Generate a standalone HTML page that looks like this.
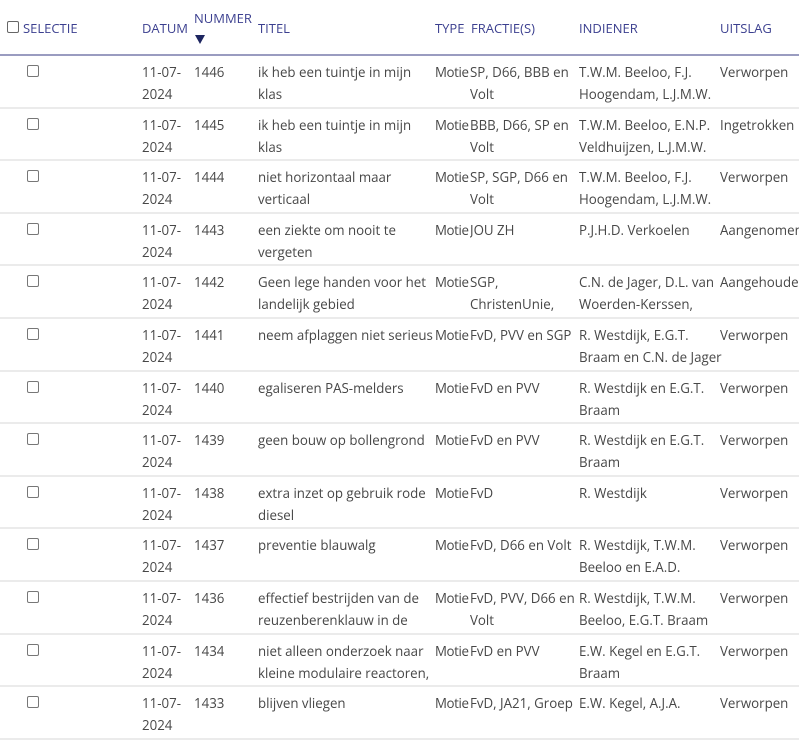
<!DOCTYPE html>
<html><head><meta charset="utf-8">
<style>
*{margin:0;padding:0;box-sizing:border-box}
body{width:799px;height:712px;overflow:hidden;background:#fff;font-family:"Open Sans","Liberation Sans",sans-serif;font-size:13.3px;color:#474747;position:relative}
.h{position:absolute;color:#3b3f8f;font-size:13px;top:20px;line-height:16px}
.hl{position:absolute;left:0;top:54px;width:799px;height:2px;background:#9a9cc0}
.r{position:absolute;left:0;width:799px;height:52.6px;border-bottom:2px solid #ebebeb}
.c{position:absolute;top:5px;line-height:22px;height:44px;overflow:hidden;white-space:normal}
.m{letter-spacing:-0.4px}
.cb{position:absolute;left:27px;top:9px;width:12px;height:12px;border:1px solid #777;border-radius:2px;background:#fff}
</style></head><body>
<div style="position:absolute;left:7px;top:21px;width:12px;height:12px;border:1px solid #666;border-radius:2px"></div>
<div class="h" style="left:23px">SELECTIE</div>
<div class="h" style="left:142px">DATUM</div>
<div class="h" style="left:194px;top:10px">NUMMER</div>
<div style="position:absolute;left:195px;top:35px;width:0;height:0;border-left:5px solid transparent;border-right:5px solid transparent;border-top:9px solid #1d2560"></div>
<div class="h" style="left:258px">TITEL</div>
<div class="h" style="left:435px">TYPE</div>
<div class="h" style="left:471px">FRACTIE(S)</div>
<div class="h" style="left:579px">INDIENER</div>
<div class="h" style="left:720px">UITSLAG</div>
<div class="hl"></div>

<div class="r" style="top:56px"><div class="cb"></div><div class="c" style="left:142px;width:45px">11-07-<br>2024</div><div class="c" style="left:194px">1446</div><div class="c" style="left:258px;width:175px">ik heb een tuintje in mijn klas</div><div class="c m" style="left:435px">Motie</div><div class="c" style="left:470px;width:108px">SP, D66, BBB en Volt</div><div class="c" style="left:579px;width:140px">T.W.M. Beeloo, F.J. Hoogendam, L.J.M.W.</div><div class="c" style="left:720px;white-space:nowrap">Verworpen</div></div>
<div class="r" style="top:108.6px"><div class="cb"></div><div class="c" style="left:142px;width:45px">11-07-<br>2024</div><div class="c" style="left:194px">1445</div><div class="c" style="left:258px;width:175px">ik heb een tuintje in mijn klas</div><div class="c m" style="left:435px">Motie</div><div class="c" style="left:470px;width:108px">BBB, D66, SP en Volt</div><div class="c" style="left:579px;width:140px">T.W.M. Beeloo, E.N.P. Veldhuijzen, L.J.M.W.</div><div class="c" style="left:720px;white-space:nowrap">Ingetrokken</div></div>
<div class="r" style="top:161.2px"><div class="cb"></div><div class="c" style="left:142px;width:45px">11-07-<br>2024</div><div class="c" style="left:194px">1444</div><div class="c" style="left:258px;width:175px">niet horizontaal maar verticaal</div><div class="c m" style="left:435px">Motie</div><div class="c" style="left:470px;width:108px">SP, SGP, D66 en Volt</div><div class="c" style="left:579px;width:140px">T.W.M. Beeloo, F.J. Hoogendam, L.J.M.W.</div><div class="c" style="left:720px;white-space:nowrap">Verworpen</div></div>
<div class="r" style="top:213.8px"><div class="cb"></div><div class="c" style="left:142px;width:45px">11-07-<br>2024</div><div class="c" style="left:194px">1443</div><div class="c" style="left:258px;width:175px">een ziekte om nooit te vergeten</div><div class="c m" style="left:435px">Motie</div><div class="c" style="left:470px;width:108px">JOU ZH</div><div class="c" style="left:579px;width:140px">P.J.H.D. Verkoelen</div><div class="c" style="left:720px;white-space:nowrap">Aangenomen</div></div>
<div class="r" style="top:266.4px"><div class="cb"></div><div class="c" style="left:142px;width:45px">11-07-<br>2024</div><div class="c" style="left:194px">1442</div><div class="c" style="left:258px;width:175px">Geen lege handen voor het landelijk gebied</div><div class="c m" style="left:435px">Motie</div><div class="c" style="left:470px;width:108px">SGP, ChristenUnie,</div><div class="c" style="left:579px;width:140px">C.N. de Jager, D.L. van Woerden-Kerssen,</div><div class="c" style="left:720px;white-space:nowrap">Aangehouden</div></div>
<div class="r" style="top:319px"><div class="cb"></div><div class="c" style="left:142px;width:45px">11-07-<br>2024</div><div class="c" style="left:194px">1441</div><div class="c" style="left:258px;width:176px;white-space:nowrap">neem afplaggen niet serieus</div><div class="c m" style="left:435px">Motie</div><div class="c" style="left:470px;width:110px">FvD, PVV en SGP</div><div class="c" style="left:579px;width:145px">R. Westdijk, E.G.T. Braam en C.N. de Jager</div><div class="c" style="left:720px;white-space:nowrap">Verworpen</div></div>
<div class="r" style="top:371.6px"><div class="cb"></div><div class="c" style="left:142px;width:45px">11-07-<br>2024</div><div class="c" style="left:194px">1440</div><div class="c" style="left:258px;width:175px">egaliseren PAS-melders</div><div class="c m" style="left:435px">Motie</div><div class="c" style="left:470px;width:108px">FvD en PVV</div><div class="c" style="left:579px;width:140px">R. Westdijk en E.G.T. Braam</div><div class="c" style="left:720px;white-space:nowrap">Verworpen</div></div>
<div class="r" style="top:424.2px"><div class="cb"></div><div class="c" style="left:142px;width:45px">11-07-<br>2024</div><div class="c" style="left:194px">1439</div><div class="c" style="left:258px;width:175px">geen bouw op bollengrond</div><div class="c m" style="left:435px">Motie</div><div class="c" style="left:470px;width:108px">FvD en PVV</div><div class="c" style="left:579px;width:140px">R. Westdijk en E.G.T. Braam</div><div class="c" style="left:720px;white-space:nowrap">Verworpen</div></div>
<div class="r" style="top:476.8px"><div class="cb"></div><div class="c" style="left:142px;width:45px">11-07-<br>2024</div><div class="c" style="left:194px">1438</div><div class="c" style="left:258px;width:175px">extra inzet op gebruik rode diesel</div><div class="c m" style="left:435px">Motie</div><div class="c" style="left:470px;width:108px">FvD</div><div class="c" style="left:579px;width:140px">R. Westdijk</div><div class="c" style="left:720px;white-space:nowrap">Verworpen</div></div>
<div class="r" style="top:529.4px"><div class="cb"></div><div class="c" style="left:142px;width:45px">11-07-<br>2024</div><div class="c" style="left:194px">1437</div><div class="c" style="left:258px;width:175px">preventie blauwalg</div><div class="c m" style="left:435px">Motie</div><div class="c" style="left:470px;width:110px">FvD, D66 en Volt</div><div class="c" style="left:579px;width:140px">R. Westdijk, T.W.M. Beeloo en E.A.D.</div><div class="c" style="left:720px;white-space:nowrap">Verworpen</div></div>
<div class="r" style="top:582px"><div class="cb"></div><div class="c" style="left:142px;width:45px">11-07-<br>2024</div><div class="c" style="left:194px">1436</div><div class="c" style="left:258px;width:175px">effectief bestrijden van de reuzenberenklauw in de</div><div class="c m" style="left:435px">Motie</div><div class="c" style="left:470px;width:108px">FvD, PVV, D66 en Volt</div><div class="c" style="left:579px;width:140px">R. Westdijk, T.W.M. Beeloo, E.G.T. Braam</div><div class="c" style="left:720px;white-space:nowrap">Verworpen</div></div>
<div class="r" style="top:634.6px"><div class="cb"></div><div class="c" style="left:142px;width:45px">11-07-<br>2024</div><div class="c" style="left:194px">1434</div><div class="c" style="left:258px;width:175px">niet alleen onderzoek naar kleine modulaire reactoren,</div><div class="c m" style="left:435px">Motie</div><div class="c" style="left:470px;width:108px">FvD en PVV</div><div class="c" style="left:579px;width:140px">E.W. Kegel en E.G.T. Braam</div><div class="c" style="left:720px;white-space:nowrap">Verworpen</div></div>
<div class="r" style="top:687.2px"><div class="cb"></div><div class="c" style="left:142px;width:45px">11-07-<br>2024</div><div class="c" style="left:194px">1433</div><div class="c" style="left:258px;width:175px">blijven vliegen</div><div class="c m" style="left:435px">Motie</div><div class="c" style="left:470px;width:110px">FvD, JA21, Groep</div><div class="c" style="left:579px;width:140px">E.W. Kegel, A.J.A.</div><div class="c" style="left:720px;white-space:nowrap">Verworpen</div></div>
</body></html>
